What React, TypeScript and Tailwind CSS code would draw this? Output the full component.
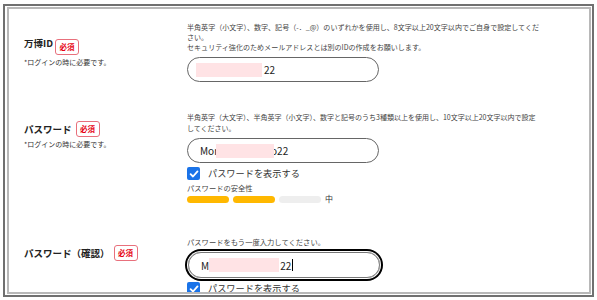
import React from "react";

const Badge = () => (
  <span className="ml-[4px] inline-flex h-[16px] w-[24px] items-center justify-center rounded-[3px] border border-[#e8707c] text-[7.5px] font-bold leading-none text-[#e60012]">
    必須
  </span>
);

const Check = ({ label }: { label: string }) => (
  <div className="flex items-center">
    <span className="flex h-[13px] w-[13px] items-center justify-center rounded-[2px] bg-[#1a73e8]">
      <svg width="10" height="10" viewBox="0 0 10 10">
        <path d="M1.6 5.2 L4 7.5 L8.5 2.4" fill="none" stroke="white" strokeWidth="1.8" strokeLinecap="round" strokeLinejoin="round" />
      </svg>
    </span>
    <span className="ml-[8px] text-[9.2px] leading-[13px] text-[#333]">{label}</span>
  </div>
);

const Pink = ({ w, ml = 0 }: { w: number; ml?: number }) => (
  <span
    className="relative z-10 inline-block h-[14px] bg-[#ffe3e5]"
    style={{ width: w, marginLeft: ml }}
  />
);

export default function App() {
  return (
    <div className="h-[300px] w-[597px] overflow-hidden bg-white font-['Noto_Sans_CJK_JP','Noto_Sans',sans-serif]">
      <div className="ml-[3px] mt-[4px] h-[293px] w-[591px] border-2 border-[#707070] pb-[1px] pl-[2px] pr-[1px] pt-[1px]">
        <div className="h-full w-full overflow-hidden border-2 border-[#b8b8b8] bg-white pt-[13px]">
          {/* Row 1 */}
          <div className="flex">
            <div className="w-[178px] shrink-0 pl-[15px] pt-[9px]">
              <div className="flex items-center">
                <span className="text-[9.5px] font-bold leading-[15px] text-[#222]">万博ID</span>
                <span className="ml-[-2px]"><Badge /></span>
              </div>
              <div className="mt-[2px] text-[7px] leading-[10px] text-[#333]">*ログインの時に必要です。</div>
            </div>
            <div className="flex-1">
              <div className="whitespace-nowrap text-[7.05px] leading-[10px] text-[#444]">
                <div>半角英字（小文字）、数字、記号（-．_@）のいずれかを使用し、8文字以上20文字以内でご自身で設定してくだ</div>
                <div>さい。</div>
                <div>セキュリティ強化のためメールアドレスとは別のIDの作成をお願いします。</div>
              </div>
              <div className="mt-[5px] flex h-[25px] w-[192px] items-center rounded-full border border-[#666] pl-[8px] text-[10px] text-[#222]">
                <Pink w={66} />
                <span className="ml-[2px]">22</span>
              </div>
            </div>
          </div>

          {/* Row 2 */}
          <div className="mt-[30px] flex">
            <div className="w-[178px] shrink-0 pl-[15px] pt-[9px]">
              <div className="flex items-center">
                <span className="text-[9.5px] font-bold leading-[15px] text-[#222]">パスワード</span>
                <Badge />
              </div>
              <div className="mt-[2px] text-[7px] leading-[10px] text-[#333]">*ログインの時に必要です。</div>
            </div>
            <div className="flex-1">
              <div className="whitespace-nowrap text-[7px] leading-[10.5px] text-[#444]">
                <div>半角英字（大文字）、半角英字（小文字）、数字と記号のうち3種類以上を使用し、10文字以上20文字以内で設定</div>
                <div>してください。</div>
              </div>
              <div className="mt-[5px] flex h-[25px] w-[192px] items-center rounded-full border border-[#666] pl-[12px] text-[10px] text-[#222]">
                <span>Mor</span>
                <Pink w={58} ml={-2} />
                <span className="ml-[-3px]">o22</span>
              </div>
              <div className="mt-[4px]">
                <Check label="パスワードを表示する" />
              </div>
              <div className="mt-[3px] text-[7.3px] leading-[10px] text-[#444]">パスワードの安全性</div>
              <div className="mt-[1px] flex items-center">
                <span className="h-[7px] w-[42px] rounded-full bg-[#ffb800]" />
                <span className="ml-[4px] h-[7px] w-[42px] rounded-full bg-[#ffb800]" />
                <span className="ml-[4px] h-[7px] w-[42px] rounded-full bg-[#eeeeee]" />
                <span className="ml-[4px] text-[8px] leading-[10px] text-[#333]">中</span>
              </div>
            </div>
          </div>

          {/* Row 3 */}
          <div className="mt-[33px] flex">
            <div className="w-[178px] shrink-0 pl-[15px] pt-[8px]">
              <div className="flex items-center">
                <span className="text-[9.5px] font-bold leading-[15px] text-[#222]">パスワード（確認）</span>
                <Badge />
              </div>
            </div>
            <div className="flex-1">
              <div className="whitespace-nowrap text-[7.3px] leading-[10px] text-[#444]">パスワードをもう一度入力してください。</div>
              <div className="ml-[1px] mt-[5px] flex h-[26px] w-[192px] items-center rounded-full border border-[#777] pl-[12px] text-[10px] text-[#222] ring-2 ring-black ring-offset-1">
                <span>M</span>
                <Pink w={70} ml={0} />
                <span className="ml-[1px]">22</span>
                <span className="ml-[1px] h-[12px] w-px bg-black" />
              </div>
              <div className="mt-[4px]">
                <Check label="パスワードを表示する" />
              </div>
            </div>
          </div>
        </div>
      </div>
    </div>
  );
}
